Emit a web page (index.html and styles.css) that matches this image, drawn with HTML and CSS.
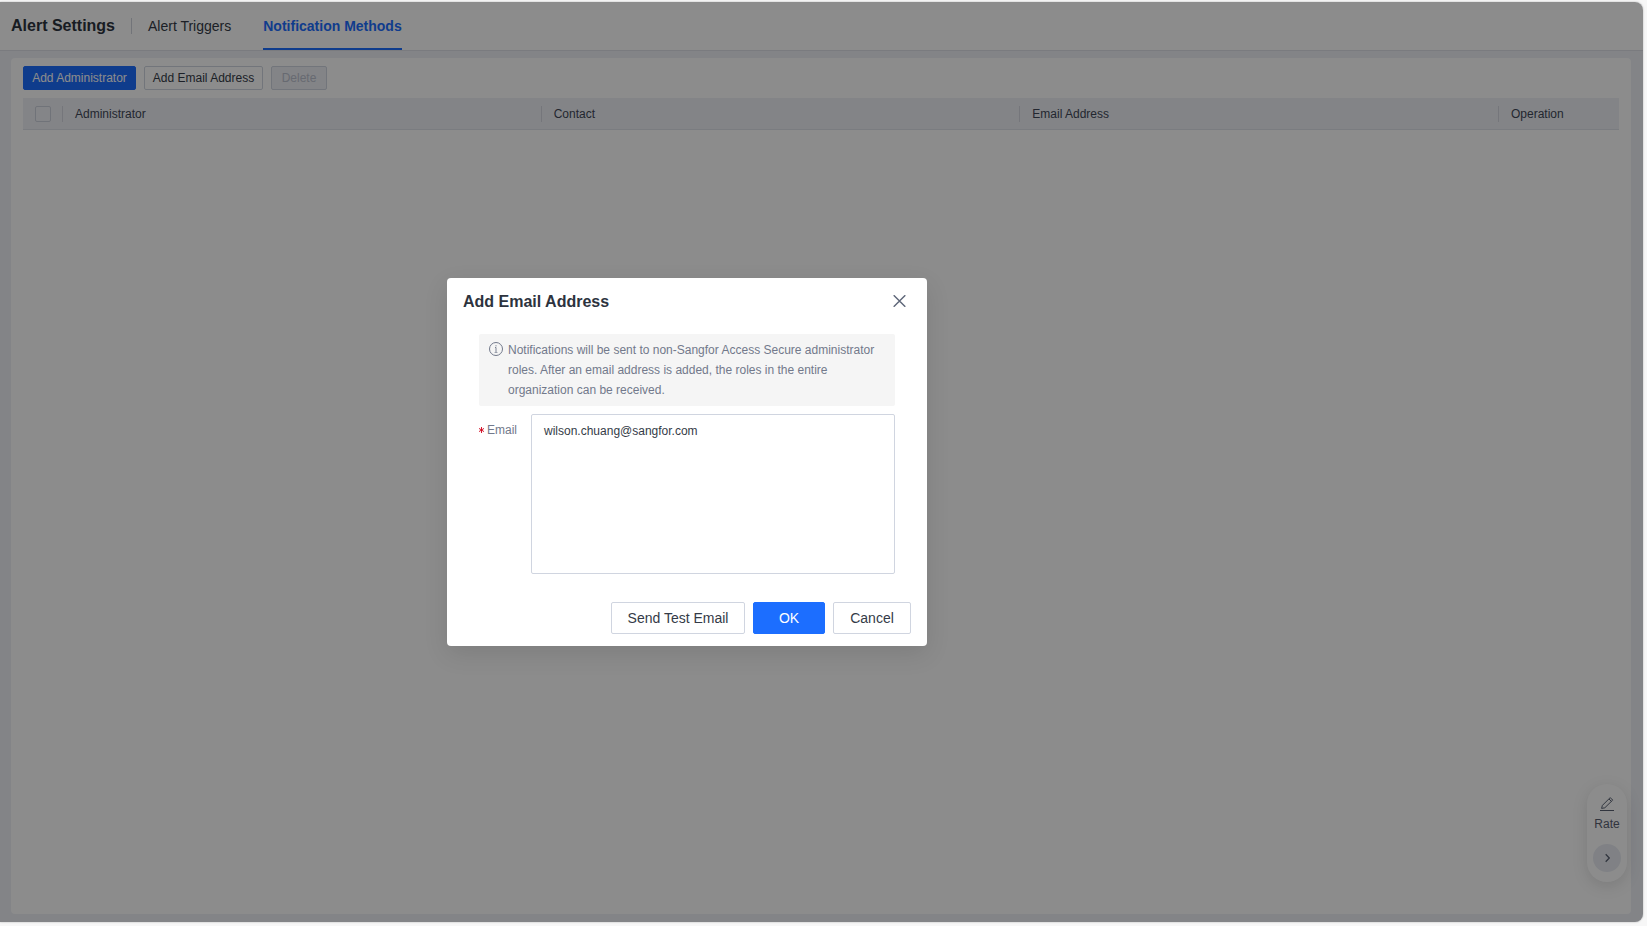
FILE: index.html
```html
<!DOCTYPE html>
<html>
<head>
    <meta charset="utf-8">
    <title>Alert Settings</title>
    <link rel="stylesheet" href="styles.css">
</head>
<body>
    <div class="app">
        <div class="header">
            <div class="title">Alert Settings</div>
            <div class="tab">Alert Triggers</div>
            <div class="tab active">Notification Methods</div>
        </div>
        <div class="panel">
            <div class="toolbar">
                <button class="btn btn-primary add-admin">Add Administrator</button>
                <button class="btn add-email">Add Email Address</button>
                <button class="btn delete" disabled>Delete</button>
            </div>
            <div class="table-head">
                <div class="th"><span class="checkbox"></span></div>
                <div class="th">Administrator</div>
                <div class="th">Contact</div>
                <div class="th">Email Address</div>
                <div class="th">Operation</div>
            </div>
        </div>

        <div class="rate">
            <svg width="14" height="14" viewBox="0 0 14 14" fill="none" stroke="#5a6172">
                <path d="M1.6 11.4 L2.4 8.4 L10.2 0.6 L12.7 3.1 L4.8 10.8 Z M9 2 L11.3 4.3"/>
                <path d="M0 13.5 H14"/>
            </svg>
            <span class="rate-text">Rate</span>
            <span class="rate-arrow">
                <svg width="8" height="10" viewBox="0 0 8 10" fill="none" stroke="#5a6172" stroke-width="1.3">
                    <path d="M2.7 1.3 L6.3 5 L2.7 8.7"/>
                </svg>
            </span>
        </div>

        <div class="mask"></div>
    </div>

    <div class="modal">
        <div class="modal-header">
            <span>Add Email Address</span>
            <svg width="13" height="12" viewBox="0 0 13 12" fill="none" stroke="#5f6779" stroke-width="1.4">
                <path d="M0.7 0.2 L12.3 11.8 M12.3 0.2 L0.7 11.8"/>
            </svg>
        </div>
        <div class="modal-body">
            <div class="notice">
                <svg width="14" height="14" viewBox="0 0 14 14" fill="none" stroke="#72798b">
                    <circle cx="7" cy="7" r="6.5"/>
                    <path d="M7 3.2 V4.4 M6 5.5 H7 V10.5" stroke-width="0.9"/>
                    <path d="M5.5 10.5 H8.5" stroke-width="0.6"/>
                </svg>
                <p>Notifications will be sent to non-Sangfor Access Secure administrator roles. After an email address is added, the roles in the entire organization can be received.</p>
            </div>
            <div class="field">
                <label for="email">
                    <svg width="5" height="6" viewBox="0 0 5 6" stroke="#d0021b" stroke-width="0.9">
                        <path d="M2.5 0 V6 M0 1.4 L5 4.6 M5 1.4 L0 4.6"/>
                    </svg>
                    Email
                </label>
                <textarea id="email" spellcheck="false">wilson.chuang@sangfor.com</textarea>
            </div>
        </div>
        <div class="modal-footer">
            <button class="btn-large send">Send Test Email</button>
            <button class="btn-large ok">OK</button>
            <button class="btn-large cancel">Cancel</button>
        </div>
    </div>
</body>
</html>
```

FILE: styles.css
```css
* {
    box-sizing: border-box;
}

body {
    margin: 0;
    height: 926px;
    padding: 2px 4px 4px 0;
    overflow: hidden;
    background: #f7f7f7;
    font-family: "Liberation Sans", Arial, sans-serif;
    font-size: 12px;
    color: #343b47;
}

.app {
    position: relative;
    height: 920px;
    display: flex;
    flex-direction: column;
    overflow: hidden;
    border-radius: 0 8px 8px 0;
    background: #eef0f6;
    box-shadow: 0 0 2px rgba(0, 0, 0, 0.3);
}

/* top tabs */
.header {
    display: flex;
    height: 49px;
    padding-left: 11px;
    background: #fff;
    border-bottom: 1px solid #dfe1e8;
}

.title {
    height: 16px;
    margin: 16px 16px 0 0;
    padding-right: 16px;
    border-right: 1px solid #d0d3dc;
    font-size: 16px;
    font-weight: bold;
    line-height: 16px;
    color: #2d333e;
    width: 121px;
    white-space: nowrap;
}

.tab {
    height: 48px;
    margin-right: 32px;
    font-size: 14px;
    line-height: 48px;
    white-space: nowrap;
}

.active {
    font-weight: bold;
    color: #1c6eff;
    border-bottom: 2px solid #1c6eff;
}

.panel {
    flex: 1;
    margin: 7px 12px 8px 11px;
    padding: 8px 12px;
    border-radius: 4px;
    background: #fff;
}

.toolbar {
    display: flex;
    gap: 8px;
    margin-bottom: 8px;
}

.btn {
    height: 24px;
    padding: 0;
    border: 1px solid #d0d5e0;
    border-radius: 2px;
    background: #fff;
    font-family: inherit;
    font-size: 12px;
    color: #343b47;
}

.btn-primary {
    background: #1c6eff;
    border-color: #1c6eff;
    color: #fff;
}

.add-admin {
    width: 113px;
}

.add-email {
    width: 119px;
}

.delete {
    width: 56px;
    background: #eef0f6;
    color: #bcc1ce;
}

.table-head {
    display: grid;
    grid-template-columns: 40px 1fr 1fr 1fr 120px;
    align-items: center;
    height: 32px;
    background: #eef0f6;
    border-bottom: 1px solid #dfe2ea;
}

.th {
    height: 16px;
    line-height: 16px;
    padding-left: 12px;
    border-right: 1px solid #d5d8e0;
    color: #414858;
}

.th:last-child {
    border-right: 0;
}

.checkbox {
    display: block;
    width: 16px;
    height: 16px;
    border: 1px solid #cdd1dc;
    border-radius: 2px;
    background: #f0f2f7;
}

/* floating widget */
.rate {
    position: absolute;
    right: 16px;
    bottom: 40px;
    display: flex;
    flex-direction: column;
    align-items: center;
    width: 40px;
    height: 98px;
    padding: 13px 0 10px;
    border-radius: 20px;
    background: #fff;
    box-shadow: 0 4px 16px rgba(0, 0, 0, 0.12);
}

.rate-text {
    margin-top: 5px;
    line-height: 16px;
    color: #5a6172;
}

.rate-arrow {
    display: flex;
    align-items: center;
    justify-content: center;
    width: 28px;
    height: 28px;
    margin-top: auto;
    border-radius: 50%;
    background: #e9ecf3;
}

.mask {
    position: absolute;
    top: 0;
    right: 0;
    bottom: 0;
    left: 0;
    background: rgba(0, 0, 0, 0.45);
}

/* dialog */
.modal {
    position: absolute;
    top: 278px;
    left: 447px;
    width: 480px;
    height: 368px;
    display: flex;
    flex-direction: column;
    border-radius: 4px;
    background: #fff;
    box-shadow: 0 8px 24px rgba(0, 0, 0, 0.1);
}

.modal-header {
    display: flex;
    align-items: center;
    justify-content: space-between;
    height: 46px;
    padding: 0 21px 0 16px;
    font-size: 16px;
    font-weight: bold;
    color: #2d333e;
}

.modal-header span {
    padding-top: 2px;
}

.modal-body {
    flex: 1;
    padding: 10px 32px 0;
}

.notice {
    display: flex;
    gap: 5px;
    height: 72px;
    padding: 6px 10px;
    border-radius: 2px;
    background: #f5f5f5;
    color: #72798b;
}

.notice svg {
    flex: none;
    margin-top: 2px;
}

.notice p {
    margin: 0;
    line-height: 20px;
}

.field {
    display: flex;
    margin-top: 8px;
}

.field label {
    display: flex;
    align-items: center;
    gap: 3px;
    width: 52px;
    height: 32px;
    color: #72798b;
}

.field textarea {
    width: 364px;
    height: 160px;
    padding: 6px 12px;
    border: 1px solid #d0d5e0;
    border-radius: 2px;
    resize: none;
    outline: none;
    font-family: inherit;
    font-size: 12px;
    line-height: 20px;
    color: #343b47;
}

.modal-footer {
    display: flex;
    justify-content: flex-end;
    gap: 8px;
    padding: 0 16px 12px;
}

.btn-large {
    height: 32px;
    padding: 0;
    border: 1px solid #d0d5e0;
    border-radius: 2px;
    background: #fff;
    font-family: inherit;
    font-size: 14px;
    color: #343b47;
}

.send {
    width: 134px;
}

.ok {
    width: 72px;
    background: #1c6eff;
    border-color: #1c6eff;
    color: #fff;
}

.cancel {
    width: 78px;
}
```
